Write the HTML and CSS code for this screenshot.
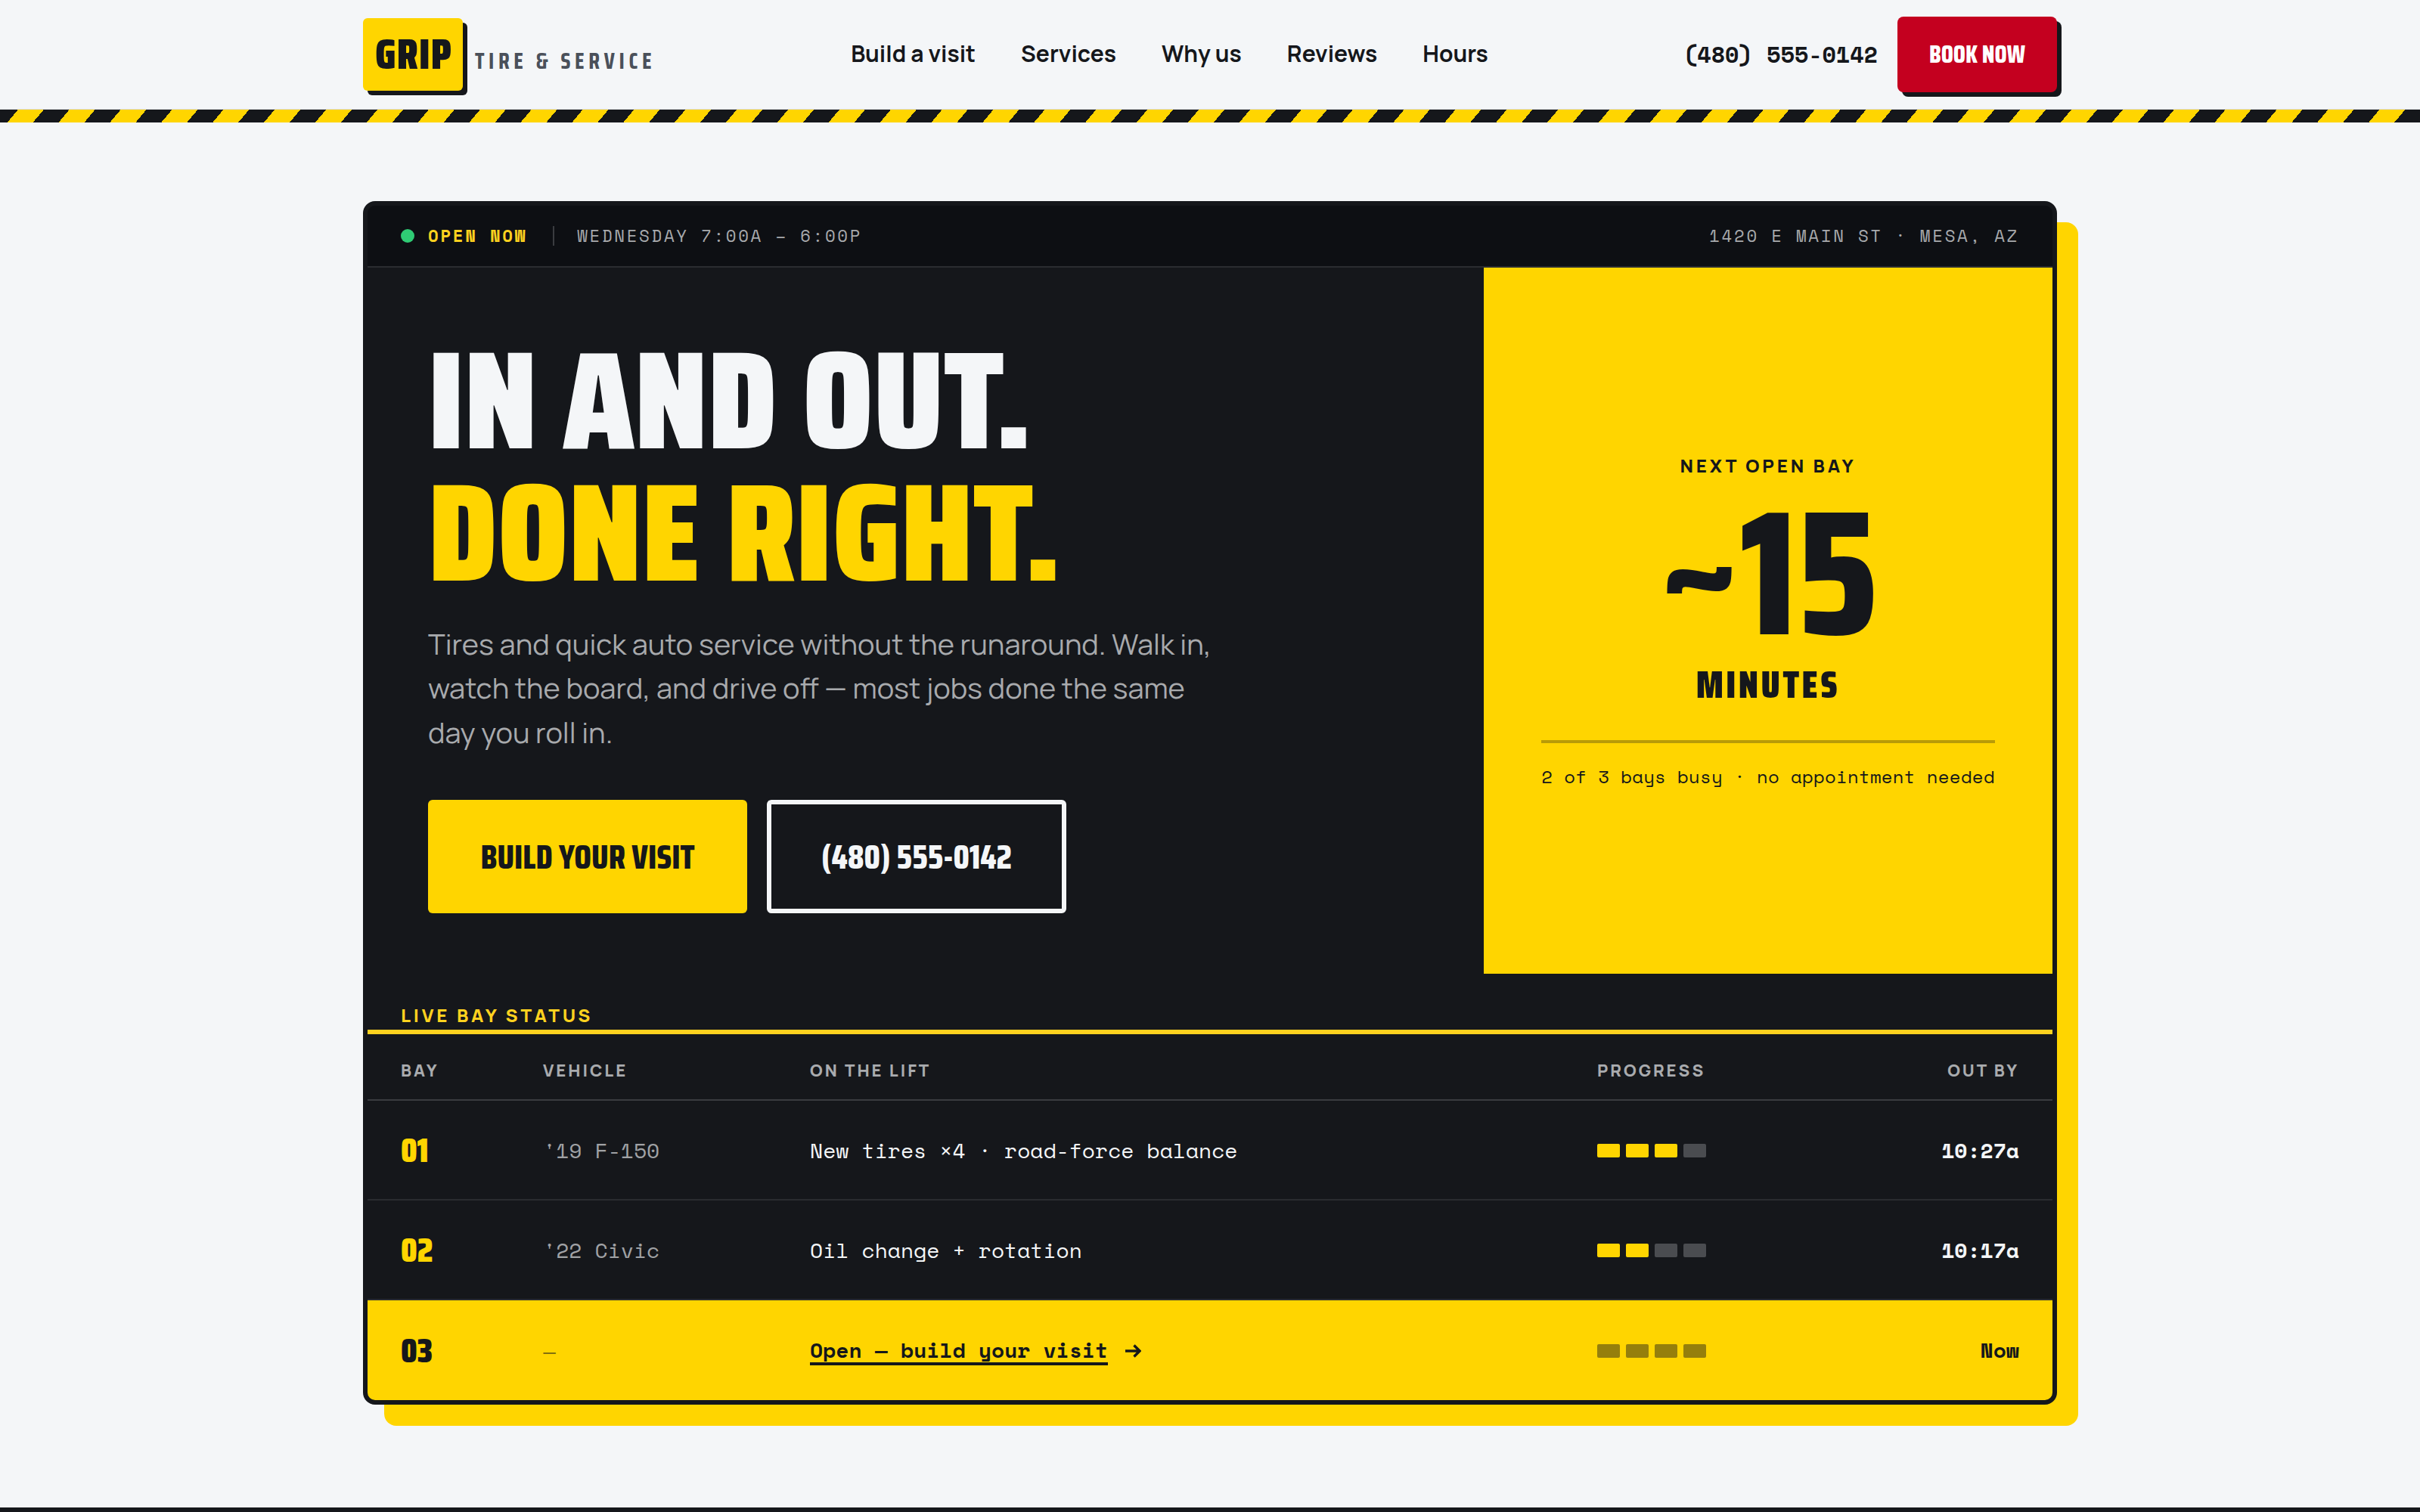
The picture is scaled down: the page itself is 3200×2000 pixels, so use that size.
FILE: index.html
```html
<!DOCTYPE html>
<html lang="en">
<head>
<meta charset="utf-8">
<title>GRIP Tire &amp; Service</title>
<link rel="stylesheet" href="styles.css">
</head>
<body>
<header class="site-header">
  <div class="header-inner">
    <a class="brand" href="#">
      <span class="brand-mark">GRIP</span>
      <span class="brand-sub">TIRE &amp; SERVICE</span>
    </a>
    <nav class="nav">
      <a href="#">Build a visit</a>
      <a href="#">Services</a>
      <a href="#">Why us</a>
      <a href="#">Reviews</a>
      <a href="#">Hours</a>
    </nav>
    <div class="header-cta">
      <a class="header-phone" href="#">(480) 555-0142</a>
      <a class="book-btn" href="#">BOOK NOW</a>
    </div>
  </div>
</header>
<div class="hazard"></div>

<main class="main">
  <section class="card">
    <div class="status-bar">
      <div class="status-left">
        <span class="dot"></span>
        <span class="open">OPEN NOW</span>
        <span class="status-sep"></span>
        <span>WEDNESDAY 7:00A – 6:00P</span>
      </div>
      <div>1420 E MAIN ST · MESA, AZ</div>
    </div>

    <div class="hero">
      <div class="hero-copy">
        <h1 class="headline"><span class="line">IN AND OUT.</span><span class="line accent">DONE RIGHT.</span></h1>
        <p class="lede">Tires and quick auto service without the runaround. Walk in, watch the board, and drive off — most jobs done the same day you roll in.</p>
        <div class="hero-actions">
          <a class="btn btn-primary" href="#">BUILD YOUR VISIT</a>
          <a class="btn btn-ghost" href="#">(480) 555-0142</a>
        </div>
      </div>
      <aside class="next-bay">
        <div class="next-inner">
          <div class="next-label">NEXT OPEN BAY</div>
          <div class="next-num">~15</div>
          <div class="next-unit">MINUTES</div>
          <div class="next-note">2 of 3 bays busy · no appointment needed</div>
        </div>
      </aside>
    </div>

    <div class="board">
      <div class="board-title">LIVE BAY STATUS</div>
      <div class="row head">
        <div>BAY</div>
        <div>VEHICLE</div>
        <div>ON THE LIFT</div>
        <div>PROGRESS</div>
        <div class="end">OUT BY</div>
      </div>
      <div class="row item">
        <div class="bay">01</div>
        <div class="vehicle">'19 F-150</div>
        <div class="job">New tires ×4 · road-force balance</div>
        <div class="progress"><i class="on"></i><i class="on"></i><i class="on"></i><i></i></div>
        <div class="end out">10:27a</div>
      </div>
      <div class="row item">
        <div class="bay">02</div>
        <div class="vehicle">'22 Civic</div>
        <div class="job">Oil change + rotation</div>
        <div class="progress"><i class="on"></i><i class="on"></i><i></i><i></i></div>
        <div class="end out">10:17a</div>
      </div>
      <div class="row item open-row">
        <div class="bay">03</div>
        <div class="vehicle">—</div>
        <div class="job"><a class="job-link" href="#">Open — build your visit</a><svg class="arrow" viewBox="0 0 22 18" width="22" height="18" aria-hidden="true"><path d="M1 9h19M12.5 1.5 20 9l-7.5 7.5" fill="none" stroke="currentColor" stroke-width="3.4"/></svg></div>
        <div class="progress"><i></i><i></i><i></i><i></i></div>
        <div class="end out">Now</div>
      </div>
    </div>
  </section>
</main>
<footer class="footer"></footer>
</body>
</html>
```
FILE: styles.css
```css
* { box-sizing: border-box; }
html, body { margin: 0; padding: 0; }
body { background: #f4f6f8; color: #15171b; font-family: "Manrope", "Inter", sans-serif; }
a { color: inherit; text-decoration: none; }

.header-inner { width: 2240px; height: 144px; margin: 0 auto; display: flex; align-items: center; justify-content: space-between; }
.brand { display: flex; align-items: baseline; gap: 16px; }
.brand-mark { width: 132px; height: 96px; padding-left: 16px; background: #ffd500; border-radius: 6px; box-shadow: 6px 6px 0 #15171b; font: 900 56px/96px "Saira Condensed", sans-serif; letter-spacing: 0.02em; color: #15171b; }
.brand-sub { font: 700 30px/1 "Saira Condensed", sans-serif; letter-spacing: 0.185em; color: #4a505a; }
.nav { display: flex; gap: 60px; font-size: 30px; font-weight: 700; color: #15171b; padding-bottom: 4px; }
.header-cta { display: flex; align-items: center; gap: 26px; }
.header-phone { font: 700 30px/1 "Space Mono", monospace; }
.book-btn { height: 100px; padding: 0 42px; background: #c4001f; color: #fff; border-radius: 8px; box-shadow: 6px 6px 0 #15171b; font: 800 32px/100px "Saira Condensed", sans-serif; }

.hazard { height: 18px; border-top: 1px solid #dcdee0; background: repeating-linear-gradient(-50deg, #15171b 0 26px, #ffd500 26px 52px); }

.main { width: 2240px; margin: 0 auto; padding: 104px 0 136px; }
.card { border: 6px solid #15171b; border-radius: 16px; background: #15171b; box-shadow: 28px 28px 0 #ffd500; overflow: hidden; }

.status-bar { height: 82px; padding: 0 44px; display: flex; align-items: center; justify-content: space-between; background: #0d0f13; border-bottom: 2px solid #2a2c30; font: 400 22.4px/1 "Space Mono", monospace; letter-spacing: 0.12em; color: #a8aaad; }
.status-left { display: flex; align-items: center; }
.dot { width: 18px; height: 18px; border-radius: 50%; background: #2fcb74; margin-right: 18px; }
.open { font-weight: 700; color: #ffd21f; }
.status-sep { width: 2px; height: 26px; background: #3a3c40; margin: 0 30px 0 34px; }

.hero { display: grid; grid-template-columns: 1fr 752px; }
.hero-copy { padding: 88px 80px 80px; }
.headline { margin: 0; font: 900 184px/0.95 "Saira Condensed", sans-serif; color: #f4f6f8; }
.line { display: block; }
.accent { color: #ffd500; }
.lede { width: 1040px; margin: 30px 0 0; font-size: 38px; line-height: 1.55; font-weight: 400; color: #a8aaad; }
.hero-actions { display: flex; gap: 26px; margin-top: 60px; }
.btn { height: 150px; padding-top: 2px; border-radius: 6px; display: flex; align-items: center; justify-content: center; font: 800 44.8px/1 "Saira Condensed", sans-serif; }
.btn-primary { width: 422px; background: #ffd500; color: #15171b; }
.btn-ghost { width: 396px; border: 6px solid #f4f6f8; color: #f4f6f8; }

.next-bay { background: #ffd500; display: flex; align-items: center; justify-content: center; color: #15171b; }
.next-inner { padding-top: 4px; display: flex; flex-direction: column; align-items: center; }
.next-label { font: 800 24px/1.2 "Manrope", sans-serif; letter-spacing: 0.16em; }
.next-num { margin-top: 10px; font: 800 234px/1 "Saira Condensed", sans-serif; }
.next-unit { margin-top: 6px; font: 900 50px/1 "Saira Condensed", sans-serif; letter-spacing: 0.07em; }
.next-note { margin-top: 48px; padding-top: 28px; border-top: 4px solid rgba(21, 23, 27, 0.3); font: 400 24px/1.4 "Space Mono", monospace; letter-spacing: 0.3px; }

.board-title { padding: 41px 44px 4px; border-bottom: 6px solid #ffd21f; font: 800 24px/1.2 "Manrope", sans-serif; letter-spacing: 0.16em; color: #ffd21f; }
.row { display: grid; grid-template-columns: 188px 353px 1041px 280px 1fr; align-items: center; padding: 0 44px; }
.head { height: 88px; padding-top: 10px; border-bottom: 2px solid #3a3c40; font: 800 22px/1 "Manrope", sans-serif; letter-spacing: 0.135em; color: #a9abae; }
.item { height: 132px; border-bottom: 2px solid #2a2c30; font: 400 28px/1 "Space Mono", monospace; color: #f4f6f8; }
.end { text-align: right; }
.bay { font: 900 45px/1 "Saira Condensed", sans-serif; color: #ffd500; }
.vehicle, .job, .out { padding-top: 2px; }
.vehicle { color: #a0a2a5; }
.out { font-weight: 700; }
.progress { display: flex; gap: 8px; margin-top: 2px; }
.progress i { width: 30px; height: 18px; border-radius: 2px; background: #4a4c50; }
.progress i.on { background: #ffd500; }

.open-row { background: #ffd500; color: #15171b; border-bottom: 0; }
.open-row .bay { color: #15171b; }
.open-row .vehicle { color: rgba(21, 23, 27, 0.55); }
.open-row .out { padding-top: 0; }
.open-row .job { font-weight: 700; display: flex; align-items: center; gap: 22px; }
.job-link { margin-top: 4px; border-bottom: 4px solid #15171b; padding-bottom: 2px; }
.arrow { display: block; }
.open-row .progress i { background: rgba(21, 23, 27, 0.45); }

.footer { height: 6px; background: #15171b; }
```
